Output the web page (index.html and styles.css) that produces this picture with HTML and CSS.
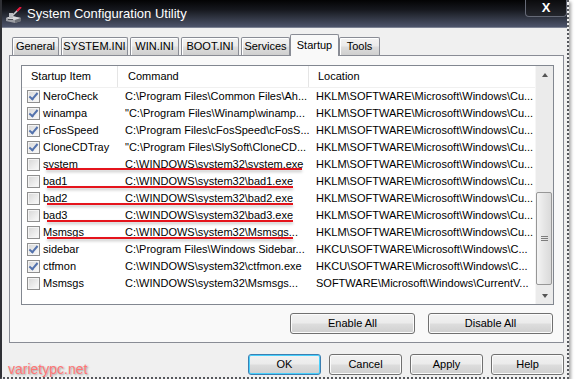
FILE: index.html
```html
<!DOCTYPE html>
<html lang="en">
<head>
    <meta charset="UTF-8">
    <title>System Configuration Utility</title>
    <link rel="stylesheet" href="styles.css">
</head>
<body>
<div class="window">
    <div class="titlebar">
        <svg class="app-icon" width="18" height="17" viewBox="0 0 18 17">
            <path d="M1 11 L7 9 L16 11 L16 14 L10 16 L1 14 Z" fill="#9a9ca2"/>
            <path d="M1 11 L7 9 L16 11 L10 13 Z" fill="#d8d9dc"/>
            <path d="M10 13 L16 11 L16 14 L10 16 Z" fill="#6d7077"/>
            <rect x="4" y="6" width="4" height="5" fill="#b9bbc0"/>
            <path d="M7 9 L14 2" stroke="#c8c9cc" stroke-width="1.6"/>
            <path d="M12 4 L16 0" stroke="#e8163c" stroke-width="2"/>
            <rect x="3" y="12" width="5" height="1" fill="#4a4c52"/>
        </svg>
        <span class="title">System Configuration Utility</span>
        <div class="close">X</div>
    </div>

    <div class="content">
        <!-- вкладки -->
        <div class="tabs">
            <div class="tab w-general">General</div>
            <div class="tab w-system">SYSTEM.INI</div>
            <div class="tab w-win">WIN.INI</div>
            <div class="tab w-boot">BOOT.INI</div>
            <div class="tab w-services">Services</div>
            <div class="tab active w-startup">Startup</div>
            <div class="tab w-tools">Tools</div>
        </div>

        <div class="panel">
            <div class="listview">
                <div class="list">
                    <div class="header">
                        <div class="hcol c1">Startup Item</div>
                        <div class="hcol c2">Command</div>
                        <div class="hcol c3">Location</div>
                    </div>

                    <div class="row">
                        <div class="cell c1"><span class="check on"></span>NeroCheck</div>
                        <div class="cell c2">C:\Program Files\Common Files\Ah...</div>
                        <div class="cell c3">HKLM\SOFTWARE\Microsoft\Windows\Cu...</div>
                    </div>
                    <div class="row">
                        <div class="cell c1"><span class="check on"></span>winampa</div>
                        <div class="cell c2">"C:\Program Files\Winamp\winamp...</div>
                        <div class="cell c3">HKLM\SOFTWARE\Microsoft\Windows\Cu...</div>
                    </div>
                    <div class="row">
                        <div class="cell c1"><span class="check on"></span>cFosSpeed</div>
                        <div class="cell c2">C:\Program Files\cFosSpeed\cFosS...</div>
                        <div class="cell c3">HKLM\SOFTWARE\Microsoft\Windows\Cu...</div>
                    </div>
                    <div class="row">
                        <div class="cell c1"><span class="check on"></span>CloneCDTray</div>
                        <div class="cell c2">"C:\Program Files\SlySoft\CloneCD...</div>
                        <div class="cell c3">HKLM\SOFTWARE\Microsoft\Windows\Cu...</div>
                    </div>
                    <div class="row flag flag-wide">
                        <div class="cell c1"><span class="check"></span>system</div>
                        <div class="cell c2">C:\WINDOWS\system32\system.exe</div>
                        <div class="cell c3">HKLM\SOFTWARE\Microsoft\Windows\Cu...</div>
                    </div>
                    <div class="row flag">
                        <div class="cell c1"><span class="check"></span>bad1</div>
                        <div class="cell c2">C:\WINDOWS\system32\bad1.exe</div>
                        <div class="cell c3">HKLM\SOFTWARE\Microsoft\Windows\Cu...</div>
                    </div>
                    <div class="row flag">
                        <div class="cell c1"><span class="check"></span>bad2</div>
                        <div class="cell c2">C:\WINDOWS\system32\bad2.exe</div>
                        <div class="cell c3">HKLM\SOFTWARE\Microsoft\Windows\Cu...</div>
                    </div>
                    <div class="row flag">
                        <div class="cell c1"><span class="check"></span>bad3</div>
                        <div class="cell c2">C:\WINDOWS\system32\bad3.exe</div>
                        <div class="cell c3">HKLM\SOFTWARE\Microsoft\Windows\Cu...</div>
                    </div>
                    <div class="row flag">
                        <div class="cell c1"><span class="check"></span>Msmsgs</div>
                        <div class="cell c2">C:\WINDOWS\system32\Msmsgs...</div>
                        <div class="cell c3">HKLM\SOFTWARE\Microsoft\Windows\Cu...</div>
                    </div>
                    <div class="row">
                        <div class="cell c1"><span class="check on"></span>sidebar</div>
                        <div class="cell c2">C:\Program Files\Windows Sidebar...</div>
                        <div class="cell c3">HKCU\SOFTWARE\Microsoft\Windows\C...</div>
                    </div>
                    <div class="row">
                        <div class="cell c1"><span class="check on"></span>ctfmon</div>
                        <div class="cell c2">C:\WINDOWS\system32\ctfmon.exe</div>
                        <div class="cell c3">HKCU\SOFTWARE\Microsoft\Windows\C...</div>
                    </div>
                    <div class="row">
                        <div class="cell c1"><span class="check"></span>Msmsgs</div>
                        <div class="cell c2">C:\WINDOWS\system32\Msmsgs...</div>
                        <div class="cell c3">SOFTWARE\Microsoft\Windows\CurrentV...</div>
                    </div>
                </div>

                <!-- полоса прокрутки -->
                <div class="scrollbar">
                    <div class="sb-btn"><span class="arrow-up"></span></div>
                    <div class="sb-track">
                        <div class="sb-thumb"><span class="grip"></span></div>
                    </div>
                    <div class="sb-btn"><span class="arrow-down"></span></div>
                </div>
            </div>

            <div class="panel-buttons">
                <div class="btn wide">Enable All</div>
                <div class="btn wide">Disable All</div>
            </div>
        </div>

        <div class="footer">
            <span class="watermark">varietypc.net</span>
            <div class="dialog-buttons">
                <div class="btn default">OK</div>
                <div class="btn">Cancel</div>
                <div class="btn">Apply</div>
                <div class="btn">Help</div>
            </div>
        </div>
    </div>
</div>
</body>
</html>
```

FILE: styles.css
```css
body {
    margin: 0;
    background: #fff;
    font-family: "Liberation Sans", Arial, sans-serif;
    font-size: 11px;
    color: #000;
}
.window {
    box-sizing: border-box;
    width: 569px;
    height: 379px;
    background: #f0f0f0;
    border-left: 2px solid #2f3035;
    border-right: 2px dotted #55575c;
    border-bottom: 2px dotted #55575c;
    box-shadow: 2px 2px 3px rgba(0, 0, 0, 0.35);
    overflow: hidden;
}
.titlebar {
    box-sizing: border-box;
    height: 28px;
    display: flex;
    align-items: flex-start;
    background: linear-gradient(to bottom, #030304 0%, #15171d 35%, #343947 70%, #4d546b 100%);
    border-bottom: 1px solid #7d8394;
}
.app-icon {
    margin: 7px 0 0 3px;
}
.title {
    margin: 6px 0 0 4px;
    color: #fff;
    font-size: 13px;
    line-height: 16px;
}
.close {
    margin-left: auto;
    box-sizing: border-box;
    width: 42px;
    height: 17px;
    border: 1px solid #666a77;
    border-top: none;
    border-radius: 0 0 4px 4px;
    background: linear-gradient(to bottom, #0b0b0d, #24262d);
    color: #fff;
    font-weight: bold;
    font-size: 13px;
    line-height: 15px;
    text-align: center;
}
.content {
    padding-left: 7px;
}
.tabs {
    display: flex;
    align-items: flex-end;
    height: 21px;
    margin-top: 6px;
    padding-left: 3px;
    gap: 2px;
    position: relative;
    z-index: 1;
}
.tab {
    box-sizing: border-box;
    height: 18px;
    line-height: 17px;
    text-align: center;
    border: 1px solid #898c95;
    border-bottom: none;
    border-radius: 2px 2px 0 0;
    background: linear-gradient(to bottom, #f3f3f3 0%, #ebebeb 45%, #dcdcdc 55%, #cfcfcf 100%);
    box-shadow: inset 1px 1px 0 #fff;
}
.tab.active {
    height: 22px;
    line-height: 20px;
    margin: 0 -2px -1px;
    background: #f9f9f9;
    box-shadow: none;
}
.w-general { width: 47px; }
.w-system { width: 67px; }
.w-win { width: 49px; }
.w-boot { width: 58px; }
.w-services { width: 49px; }
.w-startup { width: 49px; }
.w-tools { width: 41px; }
.panel {
    box-sizing: border-box;
    width: 555px;
    height: 288px;
    border: 1px solid #898c95;
    background: #f9f9f9;
    padding: 9px 9px 0 11px;
}
.listview {
    box-sizing: border-box;
    width: 533px;
    height: 240px;
    border: 1px solid #828790;
    background: #fff;
    display: flex;
}
.list {
    flex: 1;
    overflow: hidden;
}
.header {
    box-sizing: border-box;
    height: 22px;
    display: flex;
    border-bottom: 1px solid #f0f0f0;
}
.hcol {
    box-sizing: border-box;
    line-height: 21px;
    border-right: 1px solid #e5e5e5;
}
.hcol.c1 { padding-left: 9px; }
.hcol.c2 { padding-left: 10px; }
.hcol.c3 { padding-left: 9px; border-right: none; }
.c1 { width: 96px; }
.c2 { width: 191px; }
.c3 { flex: 1; }
.row {
    position: relative;
    display: flex;
    height: 17px;
    line-height: 17px;
}
.cell {
    box-sizing: border-box;
    white-space: nowrap;
    overflow: hidden;
}
.cell.c1 {
    display: flex;
    align-items: center;
    padding-left: 5px;
    gap: 3px;
}
.cell.c2, .cell.c3 {
    padding-left: 7px;
}
.check {
    position: relative;
    box-sizing: border-box;
    width: 13px;
    height: 13px;
    flex: none;
    border: 1px solid #8f8f8f;
    background: linear-gradient(135deg, #d6d6d6 0%, #ededed 60%, #fbfbfb 100%);
    box-shadow: inset 0 0 0 1px #f4f4f4;
}
.check.on::after {
    content: "";
    position: absolute;
    left: 3px;
    top: 0px;
    width: 3px;
    height: 7px;
    border-right: 2px solid #5372ad;
    border-bottom: 2px solid #5372ad;
    transform: rotate(40deg);
}
/* красные пометки поверх строк */
.row.flag::after {
    content: "";
    position: absolute;
    left: 25px;
    top: 13px;
    width: 246px;
    height: 2px;
    background: #e5141c;
    box-shadow: 0 2px 3px rgba(0, 0, 0, 0.25);
}
.row.flag-wide::after {
    left: 24px;
    top: 12px;
    width: 256px;
}
.scrollbar {
    width: 17px;
    display: flex;
    flex-direction: column;
    background: #ebebeb;
    border-left: 1px solid #f6f6f6;
}
.sb-btn {
    height: 17px;
    display: flex;
    align-items: center;
    justify-content: center;
}
.arrow-up {
    width: 0;
    height: 0;
    border-left: 3px solid transparent;
    border-right: 3px solid transparent;
    border-bottom: 4px solid #555;
}
.arrow-down {
    width: 0;
    height: 0;
    border-left: 3px solid transparent;
    border-right: 3px solid transparent;
    border-top: 4px solid #555;
}
.sb-track {
    flex: 1;
}
.sb-thumb {
    box-sizing: border-box;
    margin: 109px 0 0 0;
    width: 16px;
    height: 93px;
    border: 1px solid #979797;
    border-radius: 2px;
    background: linear-gradient(to right, #f4f4f4, #e6e6e6 50%, #dadada);
    display: flex;
    align-items: center;
    justify-content: center;
}
.grip {
    width: 7px;
    height: 5px;
    background: repeating-linear-gradient(to bottom, #7d7d7d 0 1px, transparent 1px 2px);
}
.panel-buttons {
    display: flex;
    justify-content: flex-end;
    gap: 13px;
    margin-top: 8px;
    padding-right: 1px;
}
.btn {
    box-sizing: border-box;
    width: 73px;
    height: 21px;
    line-height: 19px;
    text-align: center;
    border: 1px solid #707070;
    border-radius: 3px;
    background: linear-gradient(to bottom, #f2f2f2 0%, #ebebeb 48%, #dddddd 52%, #cfcfcf 100%);
    box-shadow: inset 0 0 0 1px #fbfbfb;
}
.btn.wide {
    width: 125px;
}
.btn.default {
    border-color: #3c7fb1;
    box-shadow: inset 0 0 0 1px #48d0fd;
}
.footer {
    width: 555px;
    display: flex;
    align-items: center;
    justify-content: space-between;
    margin-top: 9px;
}
.watermark {
    margin-left: -1px;
    margin-top: 9px;
    color: #ff7676;
    font-size: 14px;
    text-shadow: 1px 1px 2px rgba(0, 0, 0, 0.35);
}
.dialog-buttons {
    display: flex;
    gap: 8px;
}
```
